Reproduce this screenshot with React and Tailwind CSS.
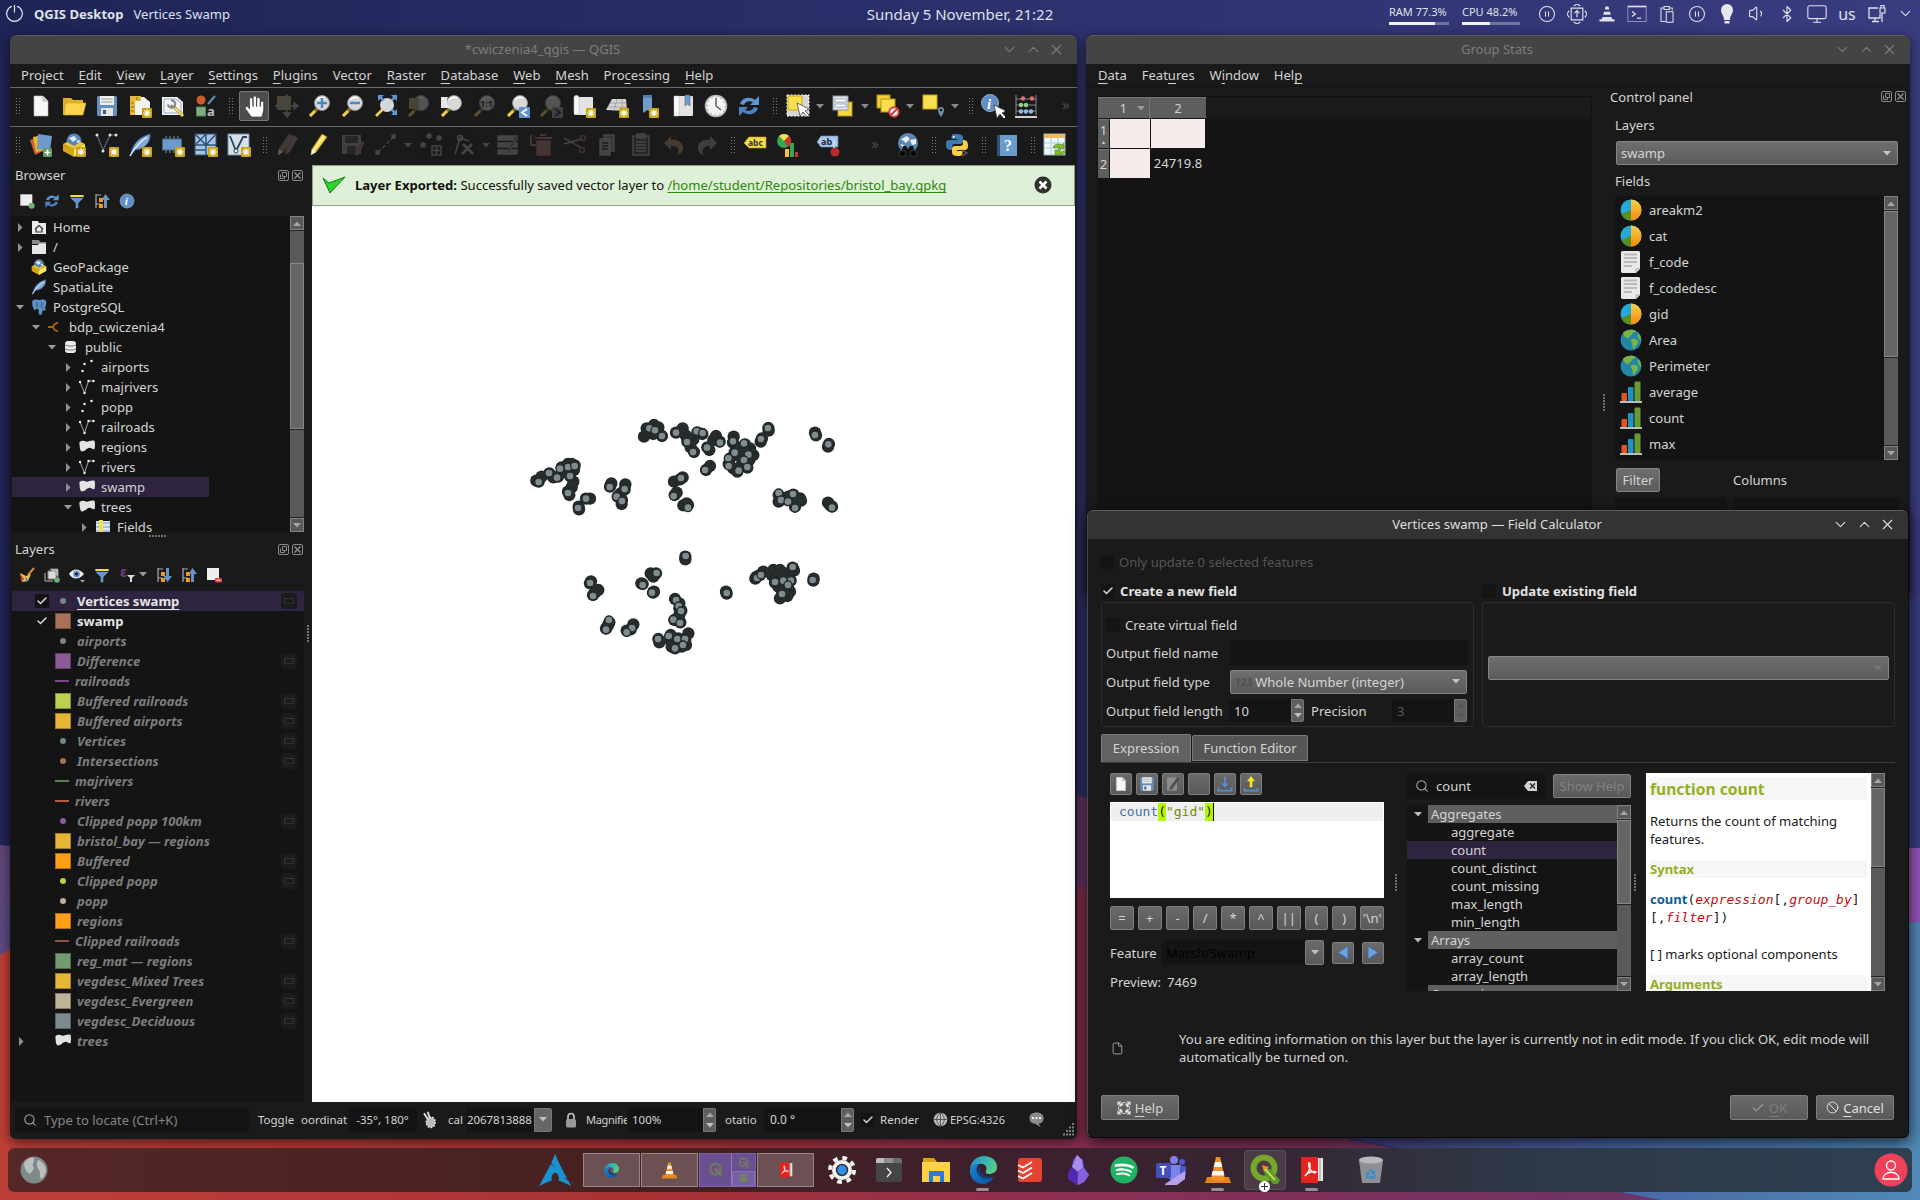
import React from "react";
import {
  Search, CirclePause, Volume1, Bluetooth, Monitor, ChevronDown, ChevronUp, X, Check, Ban, File as FileIcon, Recycle,
} from "lucide-react";
import { SiArchlinux } from "react-icons/si";
import { FaSpotify, FaHandPaper } from "react-icons/fa";

/* ---------- shared bits ---------- */

const Svg = ({ c = "size-6", vb = "0 0 24 24", children }) => (
  <svg className={"shrink-0 " + c} viewBox={vb} fill="none">{children}</svg>
);

/* "Pro~ject" underlines the letter after the tilde */
const Mn = ({ t }) => {
  const i = t.indexOf("~");
  if (i < 0) return <span>{t}</span>;
  return (
    <span>
      {t.slice(0, i)}
      <span className="underline decoration-1 underline-offset-[3px] [text-decoration-skip-ink:none]">{t[i + 1]}</span>
      {t.slice(i + 2)}
    </span>
  );
};

const Caret = ({ c = "text-[#9a9a9a]" }) => (
  <Svg c={"w-[8px] h-[5px] " + c} vb="0 0 8 5"><path d="M0 0h8L4 4.6z" fill="currentColor" /></Svg>
);
const CaretUp = ({ c = "text-[#a5a5a5]" }) => (
  <Svg c={"w-[8px] h-[5px] " + c} vb="0 0 8 5"><path d="M0 5h8L4 .4z" fill="currentColor" /></Svg>
);
const CaretRight = () => (
  <Svg c="w-[5px] h-[9px]" vb="0 0 5 9"><path d="M0 0v9l4.6-4.5z" fill="#8f8f8f" /></Svg>
);

const Handle = ({ c = "w-[13px]" }) => (
  <span className={"flex shrink-0 justify-center " + c}>
    <span className="h-[18px] w-[6px] bg-[radial-gradient(#7d7d7d_1px,transparent_1px)] bg-[size:3px_3px]" />
  </span>
);

const Dots = ({ v }) => (
  <span className={"flex gap-px " + (v ? "flex-col" : "")}>
    {[0, 1, 2, 3, 4, 5].map((i) => <span key={i} className="size-[2px] bg-[#707070]" />)}
  </span>
);

const DockButtons = () => (
  <span className="flex gap-[3px]">
    <Svg c="size-[11px]" vb="0 0 11 11"><rect x=".5" y=".5" width="10" height="10" rx="1.5" stroke="#8a8a8a" /><path d="M4.5 2.5h4v4h-4zM2.5 4.5v4h4v-2" stroke="#8a8a8a" /></Svg>
    <Svg c="size-[11px]" vb="0 0 11 11"><rect x=".5" y=".5" width="10" height="10" rx="1.5" stroke="#8a8a8a" /><path d="M2.5 2.5l6 6M8.5 2.5l-6 6" stroke="#8a8a8a" strokeWidth="1.5" /></Svg>
  </span>
);

const Scroll = ({ before, thumb }) => (
  <div className="flex w-[14px] shrink-0 flex-col bg-[#5a5a5a]">
    <span className="flex h-[14px] shrink-0 items-center justify-center border border-[#828282] bg-[#585858]"><CaretUp /></span>
    <span className={"shrink-0 border-t border-[#222] " + before} />
    <span className={"shrink-0 border border-[#868686] bg-[#656565] shadow-[0_1px_0_#222] " + thumb} />
    <span className="flex-1" />
    <span className="flex h-[14px] shrink-0 items-center justify-center border border-[#828282] bg-[#585858] shadow-[0_-1px_0_#222]"><Caret c="text-[#a5a5a5]" /></span>
  </div>
);

const TitleBar = ({ title, active }) => (
  <div className={"flex h-[29px] shrink-0 items-center rounded-t-[6px] border-t pr-[12px] pb-[2px] pl-[10px] " + (active ? "border-[#5c5c5c] bg-[#333] text-[#dedede]" : "border-[#5c5c5c] bg-[#444] text-[#7c7c7c]")}>
    <span className="w-[64px]" />
    <span className="flex-1 text-center">{title}</span>
    <span className="flex w-[64px] items-center justify-between">
      <ChevronDown size={17} strokeWidth={1.5} />
      <ChevronUp size={17} strokeWidth={1.5} />
      <X size={17} strokeWidth={1.5} />
    </span>
  </div>
);

/* ---------- QGIS icons ---------- */

const Badge = ({ x = 14, y = 14 }) => (
  <g transform={`translate(${x} ${y})`}>
    <rect width="10" height="10" rx="1" fill="#c9a20e" />
    <path d="M5 1.2v7.6M1.2 5h7.6M2.3 2.3l5.4 5.4M7.7 2.3L2.3 7.7" stroke="#fff" strokeWidth="1.1" />
  </g>
);
const Lens = ({ dim, children }) => (
  <Svg>
    <g opacity={dim ? 0.3 : 1}>
      <path d="M2 22l8-8" stroke="#8a6d20" strokeWidth="3.2" />
      <path d="M2 22l5-5" stroke="#f2cf4a" strokeWidth="2.6" />
      <circle cx="14" cy="9" r="7.5" fill="#d8d8d8" stroke="#8e8e8e" />
      <path d="M9 6a6 6 0 0 1 8-2" stroke="#fff" strokeWidth="1.5" />
      {children}
    </g>
  </Svg>
);
const NewDoc = ({ c }) => <Svg c={c}><path d="M5 2h9l5 5v15H5z" fill="#f7f7f7" stroke="#bbb" strokeWidth=".6" /><path d="M14 2v5h5" fill="#d5d5d5" stroke="#999" strokeWidth=".6" /></Svg>;
const Open = () => <Svg><path d="M1 4h8l2 2h10v15H1z" fill="#e0ae2a" /><path d="M2 21L4 9h20l-3 12z" fill="#fcd54f" stroke="#d9a826" strokeWidth=".6" /></Svg>;
const Save = ({ c }) => <Svg c={c}><rect x="2" y="2" width="20" height="20" rx="1.5" fill="#6590c0" /><rect x="5" y="2" width="14" height="9" fill="#eee" /><path d="M6.5 5h11M6.5 8h11" stroke="#999" /><rect x="6" y="14" width="12" height="8" fill="#e5e5e5" /><rect x="8" y="16" width="3" height="4" fill="#44546a" /></Svg>;
const Layout = () => <Svg><path d="M2 3h14l6 5v13H2z" fill="#f4f4f4" /><path d="M2 2h5v19H2zM2 2h11v5H2z" fill="#e2b93a" /><path d="M3 9h3M3 13h3M3 17h3M9 3v3" stroke="#8d6d10" /><Badge /></Svg>;
const Manager = () => <Svg><path d="M1 3h15l6 5v13H1z" fill="#f4f4f4" /><path d="M3 5h12l5 4v10H3z" stroke="#8fa9d6" /><path d="M13 13l9 9" stroke="#c9a840" strokeWidth="3.400" /><path d="M14 14l8 8" stroke="#f3e08a" strokeWidth="1.400" /><path d="M10 6.500a3.600 3.600 0 1 1-3 4M10 11l3 3" stroke="#8a8a8a" strokeWidth="2.200" /></Svg>;
const StyleMgr = () => <Svg><circle cx="7" cy="6" r="4.5" fill="#cc5a2a" /><path d="M14 10l7-8" stroke="#5d8fc4" strokeWidth="2" /><rect x="2.500" y="13" width="9" height="9" fill="#7cae80" stroke="#55805a" /><text x="13" y="22" fontSize="13" fontFamily="Noto Sans" fontWeight="700" fill="#bbb">a</text></Svg>;
const PanSel = () => <Svg><g opacity=".35"><rect x="2" y="2" width="14" height="14" fill="#b09a50" /><path d="M12 1v22M1 12h22M12 1l-3 4h6zM12 23l-3-4h6zM1 12l4-3v6zM23 12l-4-3v6z" stroke="#8899a8" strokeWidth="1.6" fill="#8899a8" /></g></Svg>;
const ZoomFull = () => <Svg><path d="M2 22l7-7" stroke="#f2cf4a" strokeWidth="2.600" /><circle cx="13" cy="11" r="7" fill="#d4d8dc" /><path d="M4 1h6L4 7zM23 1v6l-6-6zM23 21h-6l6-6z" fill="#5f95cf" /><path d="M4.500 1.500l5 5M22.500 1.500l-5 5M22.500 20.500l-5-5" stroke="#5f95cf" strokeWidth="2.500" /></Svg>;
const NewMap = () => <Svg><rect x="2" y="3" width="19" height="18" rx="1" fill="#e3e3e3" /><rect x="2" y="1.500" width="5" height="19" rx="2" fill="#fafafa" stroke="#bbb" strokeWidth=".6" /><Badge /></Svg>;
const Map3d = () => <Svg><path d="M7 5h14l1 12-21-1z" fill="#d5d5d5" /><path d="M5 9h16M3 13h19M12 5L9 17M17 5v12" stroke="#999" strokeWidth=".8" /><Badge /></Svg>;
const BookmarkNew = () => <Svg><path d="M5 1h9v18l-4.500-3L5 19z" fill="#6f9bcd" /><path d="M5 1h9v3H5z" fill="#5580b0" /><Badge x={11} /></Svg>;
const BookmarkShow = () => <Svg><rect x="3" y="2" width="19" height="20" rx="1" fill="#e3e3e3" /><rect x="3" y="2" width="5" height="20" fill="#fbfbfb" stroke="#bbb" strokeWidth=".5" /><path d="M14 1h5v11l-2.500-2-2.500 2z" fill="#6f9bcd" stroke="#44698f" strokeWidth=".6" /></Svg>;
const Clock = () => <Svg><circle cx="12" cy="12" r="10.500" fill="#f3f3f3" stroke="#b8b8b8" strokeWidth="1.500" /><path d="M12 4v8l5 4" stroke="#555" strokeWidth="1.400" /><circle cx="12" cy="12" r="9" stroke="#6fa0d8" strokeWidth="1.200" strokeDasharray="1 3.700" /></Svg>;
const Refresh = ({ c }) => <Svg c={c}><path d="M3 10a9 8 0 0 1 15-4l4-4v9h-9l3-3a6 5 0 0 0-9 3z" fill="#5f95d0" /><path d="M21 14a9 8 0 0 1-15 4l-4 4v-9h9l-3 3a6 5 0 0 0 9-3z" fill="#4b82bf" /></Svg>;
const Cursor = ({ x = 11, y = 9 }) => <path transform={`translate(${x} ${y})`} d="M0 0l3 13 3-4 4 5 2-2-4-4 4-2z" fill="#fff" stroke="#444" strokeWidth=".8" />;
const SelectRect = () => <Svg><rect x="1" y="1" width="22" height="21" fill="#d5d5d5" stroke="#fff" strokeDasharray="2 1.500" /><rect x="2" y="2" width="14" height="14" fill="#fbe04e" stroke="#c7a51a" /><Cursor /></Svg>;
const SelectForm = () => <Svg><rect x="7" y="8" width="14" height="14" fill="#f6d93f" stroke="#b3941a" /><rect x="2" y="2" width="15" height="14" fill="#e6e9ee" stroke="#8a93a0" /><rect x="4" y="5" width="11" height="3" fill="#fff" stroke="#7a8aa0" strokeWidth=".7" /><rect x="4" y="10" width="11" height="3" fill="#fff" stroke="#7a8aa0" strokeWidth=".7" /></Svg>;
const Deselect = () => <Svg><rect x="1" y="1" width="13" height="13" fill="#f3cf38" stroke="#b3941a" /><rect x="5" y="5" width="14" height="13" fill="#fbe04e" stroke="#b3941a" /><circle cx="18" cy="18" r="4.700" fill="#fff" stroke="#d23b3b" strokeWidth="2" /><path d="M15 21l6-6" stroke="#d23b3b" strokeWidth="2" /></Svg>;
const SelectLoc = () => <Svg><rect x="2" y="1" width="14" height="14" fill="#fbe04e" stroke="#c7a51a" /><path d="M20 23c-2-3-3-5-3-7a3 3 0 0 1 6 0c0 2-1 4-3 7z" fill="#6f92a8" /><circle cx="20" cy="16" r="1.300" fill="#1a1a1a" /></Svg>;
const Info = ({ c }) => <Svg c={c}><circle cx="12" cy="12" r="10.500" fill="#5f8fc6" stroke="#86b0dd" /><text x="8.500" y="18" fontSize="17" fontStyle="italic" fontWeight="700" fontFamily="Liberation Serif" fill="#fff">i</text></Svg>;
const Identify = () => <Svg><circle cx="9" cy="9" r="8.500" fill="#5f8fc6" stroke="#86b0dd" /><text x="6" y="15" fontSize="15" fontStyle="italic" fontWeight="700" fontFamily="Liberation Serif" fill="#fff">i</text><Cursor x={13} y={11} /></Svg>;
const Abacus = () => <Svg><path d="M2 1v20M22 1v20M2 5h20M2 11h20M2 17h20" stroke="#888" /><path d="M1 23h22" stroke="#d0d0d0" strokeWidth="2" /><g fill="#e07070"><circle cx="9" cy="4.500" r="2.200" /><circle cx="18" cy="4.500" r="2.200" /></g><g fill="#8fd08f"><circle cx="7" cy="11" r="2.200" /><circle cx="12" cy="11" r="2.200" /></g><g fill="#8fbbe0"><circle cx="7" cy="17.500" r="2.200" /><circle cx="12" cy="17.500" r="2.200" /><circle cx="17" cy="17.500" r="2.200" /></g></Svg>;
const DataSource = () => <Svg><path d="M1 7l9-3 4 14-8 4z" fill="#d0602a" /><path d="M4 4l10-2 2 15-9 2z" fill="#e9b52e" /><path d="M9 1l14 2-2 15-13-2z" fill="#6b9acb" /><rect x="14" y="15" width="9" height="9" rx="1" fill="#5d9a63" /><path d="M18.500 16.500v6M15.500 19.500h6" stroke="#fff" strokeWidth="1.700" /></Svg>;
const GeoPkg = ({ c, badge }) => <Svg c={c}><circle cx="12" cy="8" r="7.500" fill="#5a84b4" /><path d="M7 5l5-2 3 3-4 3zM14 8l4-1-1 4z" fill="#dfe8f2" /><path d="M1 11l11 5v8L1 18z" fill="#d9a412" /><path d="M23 11l-11 5v8l11-6z" fill="#fbe96a" /><path d="M1 11l11 5 11-5-4-2-7 4-7-4z" fill="#efc53a" />{badge && <Badge />}</Svg>;
const ShapeNew = () => <Svg><path d="M2 2l6 15 7-15h6" stroke="#54657a" strokeWidth="1.200" /><g fill="#d9e2ee"><circle cx="2" cy="2" r="1.500" /><circle cx="8" cy="18" r="1.500" /><circle cx="15" cy="2" r="1.500" /><circle cx="21" cy="2" r="1.500" /></g><Badge /></Svg>;
const Feather = ({ c, badge }) => <Svg c={c}><path d="M2 23C4 14 8 5 22 1c1 8-5 15-15 16z" fill="#84abd6" stroke="#3a5c84" strokeWidth="1" /><path d="M2 23C7 14 12 9 19 4" stroke="#eaf2fb" strokeWidth="1.200" />{badge && <Badge />}</Svg>;
const Memory = () => <Svg><path d="M5 3v17M9 3v17M13 3v17M17 3v17" stroke="#8296ae" /><rect x="1.500" y="6" width="19" height="11" fill="#6b9acb" stroke="#3f668f" /><Badge /></Svg>;
const MeshNew = () => <Svg><rect x="1" y="1" width="21" height="21" fill="#a9c4e2" /><path d="M1 1l11 11M12 1L1 12M12 12L22 1M1 12h21M12 1v21M1 17h10" stroke="#2f5378" strokeWidth="1.500" /><rect x="1" y="1" width="21" height="21" stroke="#2f5378" /><Badge /></Svg>;
const VirtualNew = () => <Svg><rect x="1" y="1" width="21" height="21" fill="#d6e1ec" stroke="#6b8cae" /><path d="M3 3l6 15 7-14h4" stroke="#2f4256" strokeWidth="1.800" /><circle cx="9" cy="18" r="2" fill="#fff" stroke="#2f4256" /><Badge /></Svg>;
const Pencil = ({ dim }) => <Svg><g opacity={dim ? 0.3 : 1}><path d="M3 22l1-6L14 1l5 3L8 19z" fill={dim ? "#a08080" : "#f3da57"} stroke="#9c8420" strokeWidth=".7" /><path d="M3 22l1-6 4 3z" fill="#eee" />{dim && <path d="M10 22l1-6L19 2l4 3-8 14z" fill="#a08080" />}{!dim && <path d="M6 17L16 2.500" stroke="#fff7b8" strokeWidth="1.200" />}</g></Svg>;
const Dim = ({ children }) => <Svg><g opacity=".32" stroke="#a5a5a5" strokeWidth="1.400" fill="#9a9a9a">{children}</g></Svg>;
const SaveEdits = () => <Svg><g opacity=".3"><rect x="1" y="2" width="19" height="19" fill="#9a9a9a" /><rect x="4" y="3" width="13" height="7" fill="#444" /><rect x="6" y="13" width="9" height="8" fill="#444" /><path d="M15 22l7-13" stroke="#a07070" strokeWidth="4" /></g></Svg>;
const AbcTag = () => <Svg><path d="M1 10l5-6h17v11H6z" fill="#f7dc4a" stroke="#b3941a" strokeWidth=".7" /><text x="5" y="13" fontSize="8.500" fontWeight="700" fontFamily="Noto Sans" fill="#333">abc</text></Svg>;
const Diagram = () => <Svg><circle cx="8" cy="8" r="7" fill="#34a853" /><path d="M8 8L3 3a7 7 0 0 1 10 0z" fill="#fbe04e" /><path d="M8 8l5-5a7 7 0 0 1-1 11z" fill="#c8372d" /><rect x="9" y="16" width="4" height="8" fill="#fbc02d" /><rect x="14" y="10" width="4" height="14" fill="#34a853" /><rect x="19" y="19" width="3" height="5" fill="#c8372d" /></Svg>;
const AbPin = () => <Svg><path d="M1 9l4-6h17v11H5z" fill="#a9c9ee" stroke="#5d85b5" strokeWidth=".7" /><text x="5" y="12" fontSize="9" fontWeight="700" fontFamily="Noto Sans" fill="#223">ab</text><circle cx="19" cy="19" r="4.500" fill="#b92b2b" /><path d="M18 15V8" stroke="#ddd" strokeWidth="1.500" /></Svg>;
const MetaSearch = () => <Svg><circle cx="12" cy="10" r="10" fill="#5b87b5" /><path d="M5 6l6-3 3 3-4 4zM14 7l6-1v5l-4 1zM4 11l4 1v4z" fill="#e5edf5" /><path d="M4 22l3-9h3l2 3 2-3h3l3 9z" fill="#111" /><circle cx="6.500" cy="20.500" r="3.500" fill="#090909" stroke="#555" strokeWidth=".6" /><circle cx="17.500" cy="20.500" r="3.500" fill="#090909" stroke="#555" strokeWidth=".6" /></Svg>;
const Python = () => <Svg><path d="M11 1c-5 0-4.500 2-4.500 5H12v1H4C1 7 1 10 1 12s1 5 4 5h2v-3c0-2 1-3 3-3h5c2 0 3-1 3-3V5c0-3-2-4-7-4z" fill="#3f79b0" /><path d="M13 23c5 0 4.500-2 4.500-5H12v-1h8c3 0 3-3 3-5s-1-5-4-5h-1v3c0 2-1 3-3 3h-5c-2 0-3 1-3 3v3c0 3 2 4 6 4z" fill="#f9cf45" /><circle cx="8.700" cy="3.700" r="1" fill="#fff" /><path d="M17 17l5 3-5 3" stroke="#555" strokeWidth="1.500" /></Svg>;
const HelpBook = () => <Svg><rect x="2" y="2" width="5" height="21" fill="#33506f" /><rect x="5" y="2" width="17" height="21" fill="#6b9acb" /><text x="9" y="18" fontSize="16" fontWeight="700" fontFamily="Liberation Serif" fill="#fff">?</text></Svg>;
const GroupTable = () => <Svg><rect x="1" y="1" width="21" height="21" fill="#f4f8fb" stroke="#8eb4cf" /><rect x="1" y="1" width="21" height="4" fill="#f1b95d" /><path d="M1 10h21M1 15h21M8 5v17M15 5v17" stroke="#9fd0ea" /><path d="M10 14a6 5 0 0 1 9-2l2-2v6h-6l2-2a4 3 0 0 0-4 1zM23 18a6 5 0 0 1-9 3l-2 2v-6h6l-2 2a4 3 0 0 0 4-1z" fill="#84c225" stroke="#4d7c10" strokeWidth=".6" /></Svg>;

const Cell = ({ children, c = "w-[33px]" }) => <span className={"flex shrink-0 items-center justify-center " + c}>{children}</span>;
const Drop = ({ dim }) => <Cell c="w-[12px]"><Caret c={dim ? "text-[#454545]" : "text-[#8a8a8a]"} /></Cell>;

const Toolbar1 = () => (
  <div className="flex h-[39px] shrink-0 items-center border-t border-[#6b6b6b] pb-[2px]">
    <Handle c="w-[14px] pl-px" />
    <Cell><NewDoc /></Cell><Cell><Open /></Cell><Cell><Save /></Cell><Cell><Layout /></Cell><Cell><Manager /></Cell><Cell><StyleMgr /></Cell>
    <Handle c="w-[16px] pl-[2px]" />
    <Cell c="w-[32px]"><span className="flex size-[30px] items-center justify-center rounded-[2px] border border-[#777] bg-[#4c4c4c]"><FaHandPaper size={21} color="#fff" stroke="#222" strokeWidth="14" /></span></Cell>
    <Cell><PanSel /></Cell>
    <Cell><Lens><path d="M14 4v10M9 9h10" stroke="#4f86c4" strokeWidth="2.400" /></Lens></Cell>
    <Cell><Lens><path d="M9 9h10" stroke="#4f86c4" strokeWidth="2.400" /></Lens></Cell>
    <Cell><ZoomFull /></Cell>
    <Cell><Lens dim><rect x="2" y="4" width="10" height="11" fill="#b0a878" /></Lens></Cell>
    <Cell><Lens><path d="M1 3h7c-2 4-1 8 2 11H1z" fill="#e8e8e8" /></Lens></Cell>
    <Cell><Lens dim><text x="7" y="13" fontSize="9" fontWeight="700" fontFamily="Noto Sans" fill="#222">1:1</text></Lens></Cell>
    <Cell><Lens><rect x="13" y="13" width="11" height="11" fill="#5f95cf" /><path d="M21 15l-5 3.500 5 3.500" stroke="#fff" strokeWidth="1.800" /></Lens></Cell>
    <Cell><Lens dim><rect x="13" y="13" width="11" height="11" fill="#999" /><path d="M16 15l5 3.500-5 3.500" stroke="#222" strokeWidth="1.800" /></Lens></Cell>
    <Cell><NewMap /></Cell><Cell><Map3d /></Cell><Cell><BookmarkNew /></Cell><Cell><BookmarkShow /></Cell><Cell><Clock /></Cell><Cell><Refresh /></Cell>
    <Handle c="w-[16px] pl-[4px]" />
    <Cell><SelectRect /></Cell><Drop /><Cell><SelectForm /></Cell><Drop /><Cell><Deselect /></Cell><Drop /><Cell><SelectLoc /></Cell><Drop />
    <Handle c="w-[15px] pl-[5px]" />
    <Cell><Identify /></Cell><Cell><Abacus /></Cell>
    <span className="flex-1" />
    <span className="w-[15px] pb-1 text-[15px] text-[#4a4a4a]">»</span>
  </div>
);

const Toolbar2 = () => (
  <div className="flex h-[39px] shrink-0 items-center border-t border-[#6b6b6b] pb-[2px]">
    <Handle c="w-[14px] pl-px" />
    <Cell><DataSource /></Cell><Cell><GeoPkg badge /></Cell><Cell><ShapeNew /></Cell><Cell><Feather badge /></Cell><Cell><Memory /></Cell><Cell><MeshNew /></Cell><Cell><VirtualNew /></Cell>
    <Handle c="w-[15px] pl-[4px]" />
    <Cell><Pencil dim /></Cell><Cell><Pencil /></Cell><Cell><SaveEdits /></Cell>
    <Cell><Dim><path d="M4 19L20 4" strokeDasharray="4 2" /><rect x="2" y="18" width="3" height="3" /><rect x="18" y="2" width="3" height="3" /></Dim></Cell><Drop dim />
    <Cell><Dim><circle cx="4" cy="12" r="2" /><circle cx="10" cy="3" r="2" /><circle cx="20" cy="5" r="2" /><rect x="13" y="13" width="9" height="9" fill="none" /><path d="M17.500 14v7M14 17.500h7" /></Dim></Cell>
    <Cell><Dim><path d="M3 21L8 5l9 3" fill="none" /><circle cx="8" cy="5" r="2.500" fill="none" /><path d="M10 21l10-10M11 11l10 10" strokeWidth="2.500" /></Dim></Cell><Drop dim />
    <Cell><Dim><rect x="1" y="3" width="19" height="4" /><rect x="1" y="10" width="19" height="4" /><rect x="1" y="17" width="19" height="4" /><path d="M11 20l9-17" strokeWidth="3" stroke="#777" /></Dim></Cell>
    <Cell><Dim><rect x="7" y="8" width="13" height="14" fill="#a07070" stroke="#a07070" /><path d="M5 5h17M10 2h6M1 2v10h5" stroke="#a07070" strokeWidth="2" fill="none" /></Dim></Cell>
    <Cell><Dim><path d="M1 5l18 10M1 11l18-5" fill="none" /><circle cx="20" cy="5" r="2.500" fill="none" stroke="#a06060" /><circle cx="19" cy="17" r="2.500" fill="none" stroke="#a06060" /></Dim></Cell>
    <Cell><Dim><path d="M8 2h10v16H8z" fill="#777" /><path d="M4 6h10v16H4z" /><path d="M6 10h6M6 13h6M6 16h6" stroke="#222" /></Dim></Cell>
    <Cell><Dim><rect x="4" y="3" width="16" height="19" fill="#444" /><rect x="8" y="1" width="8" height="4" /><path d="M7 9h10M7 12h10M7 15h10M7 18h10" /></Dim></Cell>
    <Cell><Dim><path d="M2 10l7-7v4c8-1 12 3 12 8 0 4-3 7-6 7 3-4 2-9-6-9v4z" fill="#a08060" stroke="none" /></Dim></Cell>
    <Cell><Dim><path d="M22 10l-7-7v4C7 6 3 10 3 15c0 4 3 7 6 7-3-4-2-9 6-9v4z" fill="#889088" stroke="none" /></Dim></Cell>
    <Handle c="w-[15px] pl-[4px]" />
    <Cell><AbcTag /></Cell><Cell><Diagram /></Cell><Cell c="w-[47px]"><AbPin /></Cell>
    <span className="flex w-[40px] justify-center pb-1 pl-2 text-[15px] text-[#4a4a4a]">»</span>
    <Cell><MetaSearch /></Cell>
    <Handle c="w-[16px] pl-[4px]" /><Cell><Python /></Cell>
    <Handle c="w-[17px] pl-[4px]" /><Cell><HelpBook /></Cell>
    <Handle c="w-[15px] pl-[4px]" /><Cell><GroupTable /></Cell>
  </div>
);

/* ---------- browser panel ---------- */

const Funnel = ({ c }) => <Svg c={c}><path d="M2 3h20v3H2z" fill="#f4d84a" /><path d="M2 7h20l-8 8v8h-4v-8z" fill="#6795c9" /></Svg>;
const TreeArrow = ({ down }) => <Svg c="size-4"  vb="0 0 16 16"><path d="M2 1v14M2 2h5M2 11h5" stroke="#aaa" strokeWidth="1.200" /><rect x="5" y="5" width="4" height="4" fill="#f09a1a" /><rect x="5" y="11" width="4" height="4" fill="#f09a1a" />{down ? <path d="M10 1h3v8h3l-4.500 6L7.500 9H10z" fill="#6795c9" /> : <path d="M10 15h3V7h3l-4.500-6L7.500 7H10z" fill="#6795c9" />}</Svg>;

const bIcon = {
  home: <Svg c="size-4" vb="0 0 16 16"><path d="M1 2h6l1 2h7v11H1z" fill="#ececec" /><path d="M4 10l4-3.500 4 3.500M5 9.500V13h6V9.500" stroke="#333" strokeWidth="1.200" /></Svg>,
  dir: <Svg c="size-4" vb="0 0 16 16"><path d="M1 1h7l1 2h6v2H1z" fill="#858a85" /><path d="M1 6h6l1-1.500h7V15H1z" fill="#e6e6e6" /></Svg>,
  gpkg: <GeoPkg c="size-4" />,
  lite: <Feather c="size-4" />,
  pg: <Svg c="size-4" vb="0 0 16 16"><path d="M2 1c3-1.300 5 0 6.500 0S13-.5 15 2c1 2-.5 6-1.500 7.500l2 .5-1.500 1.500h-2.500L11 15c-.5 1-3 1-3.200 0L7.500 10H5l-1 1.500C2 10 0 3.500 2 1z" fill="#5f90c6" /><path d="M5.500 9c1-2 .3-4 .5-6M10.500 3c1 2-.5 4 .8 6.500" stroke="#24425f" strokeWidth=".8" /></Svg>,
  conn: <Svg c="size-4" vb="0 0 16 16"><path d="M1 8h5M11 4c-3 0-4 1-5 4 1 3 2 4 5 4" stroke="#a3640c" strokeWidth="1.800" /></Svg>,
  db: <Svg c="size-4" vb="0 0 16 16"><rect x="2" y="2" width="11" height="12" rx="3" fill="#ececec" /><path d="M2 6c3 1.500 8 1.500 11 0M2 10c3 1.500 8 1.500 11 0" stroke="#777" /></Svg>,
  pt: <Svg c="size-4" vb="0 0 16 16"><g fill="#e6e6e6"><circle cx="3.500" cy="12" r="1.300" /><circle cx="5.500" cy="5" r="1.300" /><circle cx="12.500" cy="2" r="1.300" /></g></Svg>,
  ln: <Svg c="size-4" vb="0 0 16 16"><path d="M1 3l4.500 11L9.500 2h5" stroke="#aaa" strokeWidth="1" /><g fill="#eee"><circle cx="1" cy="3" r="1.200" /><circle cx="5.500" cy="14" r="1.200" /><circle cx="9.500" cy="2" r="1.200" /><circle cx="14.500" cy="2" r="1.200" /></g></Svg>,
  pg2: <Svg c="size-4" vb="0 0 16 16"><path d="M.3 3.500C2 1 5 1.500 7 2.500s5-2 8.500-.7c.7 2 .6 6 0 8.200-2 1-3-1.500-5-1.200-3 .4-4.500 4-8 3.700C.5 11 .8 6 .3 3.500z" fill="#e3e3e3" /></Svg>,
  fields: <Svg c="size-4" vb="0 0 16 16"><rect x="1" y="2" width="14" height="14" fill="#dce8f4" /><path d="M1 4h14M1 8h14M1 12h14" stroke="#6d9bcb" /><rect x="4" y="1" width="4" height="15" fill="#f4e04a" /></Svg>,
};

const browserRows = [
  ["pl-[6px]", "r", "home", "Home"],
  ["pl-[6px]", "r", "dir", "/"],
  ["pl-[6px]", "", "gpkg", "GeoPackage"],
  ["pl-[6px]", "", "lite", "SpatiaLite"],
  ["pl-[6px]", "d", "pg", "PostgreSQL"],
  ["pl-[22px]", "d", "conn", "bdp_cwiczenia4"],
  ["pl-[38px]", "d", "db", "public"],
  ["pl-[54px]", "r", "pt", "airports"],
  ["pl-[54px]", "r", "ln", "majrivers"],
  ["pl-[54px]", "r", "pt", "popp"],
  ["pl-[54px]", "r", "ln", "railroads"],
  ["pl-[54px]", "r", "pg2", "regions"],
  ["pl-[54px]", "r", "ln", "rivers"],
  ["pl-[54px]", "r", "pg2", "swamp"],
  ["pl-[54px]", "d", "pg2", "trees"],
  ["pl-[70px]", "r", "fields", "Fields"],
];

const PanelHead = ({ title, c }) => (
  <div className={"flex shrink-0 items-center justify-between pr-px pb-px pl-[4px] " + c}>
    <span>{title}</span><DockButtons />
  </div>
);

const Browser = () => (
  <>
    <PanelHead title="Browser" c="h-[21px]" />
    <div className="flex h-[30px] shrink-0 items-center gap-[9px] pb-px pl-[8px]">
      <Svg c="size-4"><rect x="2" y="2" width="18" height="17" fill="#eee" /><circle cx="19" cy="19" r="4.500" fill="#6fae75" /></Svg>
      <Refresh c="size-4" /><Funnel c="size-4" /><TreeArrow /><Info c="size-4" />
    </div>
    <div className="flex h-[316px] shrink-0 overflow-hidden bg-[#141414]">
      <div className="flex-1 pt-px pl-px">
        {browserRows.map(([pad, a, ic, t]) => (
          <div key={t} className={"flex h-5 items-center " + pad + (t === "swamp" ? " w-[197px] bg-[#2f2440]" : "")}>
            <span className="flex w-[13px] shrink-0 items-center">{a === "r" ? <CaretRight /> : a === "d" ? <Caret c="-ml-[2px] text-[#9a9a9a]" /> : null}</span>
            {bIcon[ic]}<span className="pl-[6px]">{t}</span>
          </div>
        ))}
      </div>
      <Scroll before="h-[33px]" thumb="h-[166px]" />
    </div>
  </>
);

/* ---------- layers panel ---------- */

const Sq = (cls) => <span className={"size-[16px] border border-black/30 " + cls} />;
const Ln = (cls) => <span className={"h-[2px] w-[14px] " + cls} />;
const Pt = (cls) => <span className={"ml-[5px] size-[6px] rounded-full " + cls} />;
const layers = [
  ["Vertices swamp", Pt("bg-[#76868a]"), 1],
  ["swamp", Sq("bg-[#a87259]"), 0],
  ["airports", Pt("bg-[#76868a]"), 0],
  ["Difference", Sq("bg-[#8d5a99]"), 1],
  ["railroads", Ln("bg-[#7a4886]"), 0, "l"],
  ["Buffered railroads", Sq("bg-[#bdd04f]"), 1],
  ["Buffered airports", Sq("bg-[#e5b636]"), 1],
  ["Vertices", Pt("bg-[#76868a]"), 1],
  ["Intersections", Pt("bg-[#a87259]"), 1],
  ["majrivers", Ln("bg-[#5a8057]"), 0, "l"],
  ["rivers", Ln("bg-[#b85a3c]"), 0, "l"],
  ["Clipped popp 100km", Pt("bg-[#8d5a99]"), 1],
  ["bristol_bay — regions", Sq("bg-[#e5b636]"), 0],
  ["Buffered", Sq("bg-[#ff9e17]"), 1],
  ["Clipped popp", Pt("bg-[#bdd04f]"), 1],
  ["popp", Pt("bg-[#beb297]"), 0],
  ["regions", Sq("bg-[#ff9e17]"), 0],
  ["Clipped railroads", Ln("bg-[#855545]"), 1, "l"],
  ["reg_mat — regions", Sq("bg-[#729b6f]"), 0],
  ["vegdesc_Mixed Trees", Sq("bg-[#e5b636]"), 1],
  ["vegdesc_Evergreen", Sq("bg-[#beb297]"), 1],
  ["vegdesc_Deciduous", Sq("bg-[#7d8b8f]"), 1],
  ["trees", bIcon.pg2, 0],
];

const MemInd = () => (
  <span className="flex size-4 items-center justify-center rounded-[3px] bg-[#1b1b1b]">
    <span className="h-[6px] w-[10px] rounded-[1px] border border-b-[#2c2c2c] border-[#363636]" />
  </span>
);

const Layers = () => (
  <>
    <div className="flex h-[7px] shrink-0 items-center justify-center"><Dots /></div>
    <PanelHead title="Layers" c="h-[21px]" />
    <div className="flex h-[31px] shrink-0 items-center gap-[9px] pb-[2px] pl-[8px]">
      <Svg c="size-4" vb="0 0 16 16"><path d="M9 8l6-7" stroke="#c98f3c" strokeWidth="2" /><path d="M1 6l6 3 5-2-3 7-6 1z" fill="#f1c63c" /><path d="M1 6l4 6-2 3z" fill="#c9442e" /><path d="M6 9l4 4-3 2z" fill="#5a8fd0" /></Svg>
      <Svg c="size-4" vb="0 0 16 16"><path d="M1 6v8h8" stroke="#bbb" /><path d="M4 4h8v8H4zM6 2h8v8" fill="#ddd" stroke="#888" /><circle cx="13" cy="13" r="2.800" fill="#6fae75" /></Svg>
      <Svg c="size-4" vb="0 0 16 16"><path d="M0 7c4-6 10-6 15 0-5 6-11 6-15 0z" fill="#f0f0f0" /><circle cx="7.500" cy="7" r="3.400" fill="#6795c9" /><circle cx="7.500" cy="7" r="1.500" fill="#111" /><path d="M11 13h5l-2.500 2.500z" fill="#aaa" /></Svg>
      <Funnel c="size-4" />
      <span className="flex w-[28px] items-center gap-[4px]"><Svg c="size-4" vb="0 0 16 16"><text x="1" y="10" fontSize="14" fontFamily="Noto Sans" fontWeight="700" fill="#6d4078">ε</text><path d="M8 8h8l-3 3v4h-2v-4z" fill="#ddd" /></Svg><Caret /></span>
      <TreeArrow down /><TreeArrow />
      <Svg c="size-4" vb="0 0 16 16"><rect x="1" y="1" width="12" height="12" fill="#eee" /><rect x="9" y="11" width="7" height="4.500" rx="1" fill="#e23b3b" /><path d="M10.500 13.200h4" stroke="#fff" /></Svg>
    </div>
    <div className="flex-1 bg-[#141414] pl-px">
      {layers.map(([t, sym, mem, kind], i) => (
        <div key={t} className={"flex h-5 items-center pr-[7px] " + (i === 0 ? "bg-[#2f2440]" : "")}>
          <span className="flex w-[23px] shrink-0 pl-[7px]">{t === "trees" && <CaretRight />}</span>
          <span className={"mr-[6px] flex size-[14px] shrink-0 items-center justify-center " + (i === 0 ? "bg-[#141414]" : "")}>{i < 2 && <Check size={12} strokeWidth={3.2} color="#d5d5d5" />}</span>
          <span className={"flex shrink-0 items-center " + (kind ? "w-[20px]" : "w-[22px]")}>{sym}</span>
          <span className={"flex-1 font-bold " + (i === 0 ? "text-[#e4e4e4] underline decoration-1 underline-offset-[3px] [text-decoration-skip-ink:none]" : i === 1 ? "text-[#e4e4e4]" : "text-[#7d7d7d] italic")}>{t}</span>
          {mem ? <MemInd /> : null}
        </div>
      ))}
    </div>
  </>
);

/* ---------- map ---------- */

const dark = [
  [432, 140], [440, 115], [462, 105], [460, 132], [486, 138], [475, 112], [528, 128], [548, 115], [556, 135], [592, 127], [607, 132], [562, 155], [572, 172], [582, 186], [580, 148], [648, 138], [659, 155], [622, 172], [628, 180], [640, 150],
  [701, 140], [699, 158], [805, 114], [806, 122], [786, 145], [782, 155], [735, 163], [704, 187], [720, 175], [750, 175], [760, 195], [690, 205], [686, 222], [712, 245], [732, 210], [742, 233], [720, 200], [700, 235], [728, 190], [725, 225], [748, 210],
  [945, 128], [948, 136], [987, 162], [984, 170], [630, 228], [618, 240], [116, 275], [109, 272], [125, 260], [148, 250], [160, 262], [185, 232], [204, 222], [215, 222], [224, 226], [222, 240], [210, 258], [220, 275], [174, 260], [195, 240], [204, 305], [208, 315], [215, 292],
  [258, 326], [270, 326], [236, 350], [237, 358], [334, 280], [330, 290], [376, 283], [374, 298], [353, 320], [366, 330], [365, 342], [362, 310], [548, 262], [540, 268], [522, 275], [524, 315], [530, 308], [550, 346], [564, 345], [560, 340],
  [836, 315], [843, 330], [836, 335], [862, 330], [880, 314], [885, 350], [900, 325], [903, 332], [865, 320], [888, 338], [984, 338], [990, 345], [996, 350],
  [556, 500], [556, 508], [452, 550], [468, 550], [460, 560], [428, 582], [424, 580], [462, 605], [459, 608], [273, 574], [270, 580], [295, 600], [285, 608], [279, 615], [678, 605], [680, 611], [328, 697], [324, 706], [318, 716], [400, 703], [392, 718], [380, 722],
  [525, 627], [538, 640], [538, 655], [544, 662], [538, 675], [523, 690], [541, 697], [475, 747], [478, 757], [512, 735], [510, 750], [535, 745], [565, 730], [556, 750], [558, 765], [545, 770], [525, 775], [515, 770], [540, 755],
  [790, 545], [770, 560], [766, 566], [780, 555], [820, 540], [840, 540], [815, 555], [878, 533], [882, 542], [860, 550], [845, 565], [825, 578], [835, 590], [872, 572], [864, 587], [846, 612], [840, 625], [862, 618], [870, 605], [852, 600], [830, 560], [941, 566], [940, 572],
];
const light = [
  [448, 115], [465, 121], [486, 138], [528, 128], [590, 124], [608, 129], [561, 156], [579, 186], [660, 158], [621, 173], [699, 154], [804, 114], [783, 147], [732, 160], [704, 188], [745, 194], [685, 205], [732, 210], [742, 231], [716, 242], [686, 228], [945, 135], [985, 163], [615, 240], [116, 276], [147, 249], [204, 231], [224, 228], [180, 236], [210, 258], [171, 263], [204, 309], [258, 326], [234, 354], [329, 291], [374, 297], [350, 320], [366, 333], [543, 264], [521, 318], [564, 353], [836, 309], [843, 330], [879, 312], [864, 335], [885, 354], [996, 353],
  [557, 498], [470, 549], [428, 585], [456, 608], [270, 579], [279, 618], [680, 609], [938, 570], [327, 690], [318, 719], [396, 714], [380, 727], [528, 630], [536, 648], [543, 663], [520, 689], [540, 699], [474, 747], [506, 738], [532, 747], [555, 747], [549, 765], [525, 775], [878, 531], [771, 564], [783, 555], [825, 576], [850, 572], [873, 572], [864, 585], [846, 612],
];

const MapCanvas = () => (
  <svg className="block h-[896px] w-[763px] bg-white" viewBox="312 206 763 896">
    <g transform="translate(500 390) scale(.33333)">
      {dark.map(([x, y], i) => <circle key={i} cx={x} cy={y} r="18.500" fill="#242929" />)}
      {dark.map(([x, y], i) => <circle key={i} cx={x + 2} cy={y - 2} r="11" stroke="#313838" strokeWidth="1.500" fill="none" />)}
      {light.map(([x, y], i) => <circle key={i} cx={x} cy={y} r="12" fill="#7f8d90" stroke="#23282a" strokeWidth="4" />)}
    </g>
  </svg>
);

/* ---------- status bar ---------- */

const Spin = ({ dim, h = "h-[24px]" }) => (
  <span className={"flex w-[13px] shrink-0 flex-col items-center justify-between rounded-r-[2px] border border-[#777] bg-[#5e5e5e] py-[3px] " + h}>
    <CaretUp c={dim ? "text-[#555]" : "text-[#a5a5a5]"} /><Caret c={dim ? "text-[#555]" : "text-[#c0c0c0]"} />
  </span>
);

const StatusBar = () => (
  <div className="flex h-[37px] shrink-0 items-center pb-[2px] text-[12px] text-[#d4d4d4]">
    <span className="ml-[5px] flex h-[26px] w-[234px] shrink-0 items-center rounded-[3px] bg-[#141414] pl-[8px] text-[13px] text-[#858585]"><Search size={14} strokeWidth={1.8} color="#aaa" /><span className="pl-[7px]">Type to locate (Ctrl+K)</span></span>
    <span className="ml-[9px] w-[37px] shrink-0 text-[11.500px]">Toggle</span>
    <span className="ml-[6px] w-[45px] shrink-0 text-[11.500px]">oordinat</span>
    <span className="ml-[2px] flex h-[24px] w-[69px] shrink-0 items-center justify-center rounded-[3px] bg-[#141414] text-[11.500px]">-35°, 180°</span>
    <Svg c="ml-[4px] size-[18px]"><path d="M4 3l5 8M9 1l3 10" stroke="#ddd" strokeWidth="2.500" /><ellipse cx="13" cy="15" rx="6" ry="7" fill="#bbb" stroke="#eee" strokeDasharray="2 2" strokeWidth="2" /></Svg>
    <span className="ml-[9px] w-[17px] shrink-0 text-[11.500px]">cal</span>
    <span className="ml-[1px] flex h-[24px] w-[68px] shrink-0 items-center bg-[#141414] pl-[1px] text-[11.500px] tracking-[-0.1px]">2067813888</span>
    <span className="flex h-[24px] w-[18px] shrink-0 items-center justify-center rounded-r-[2px] border border-[#777] bg-[#666]"><Caret c="text-[#c0c0c0]" /></span>
    <Svg c="ml-[12px] h-[16px] w-[14px]" vb="0 0 14 16"><path d="M4 8V4.500a3 3 0 0 1 6 0V8" stroke="#c5c5c5" strokeWidth="1.600" /><rect x="2" y="7" width="10" height="8.500" rx="1.500" fill="#999" /></Svg>
    <span className="ml-[8px] w-[41px] shrink-0 text-[11px] tracking-[-0.3px] whitespace-nowrap">Magnifie</span>
    <span className="flex h-[24px] w-[76px] shrink-0 items-center rounded-l-[3px] bg-[#141414] pl-[5px] text-[11.500px]">100%</span><Spin />
    <span className="ml-[9px] w-[35px] shrink-0 text-[11.500px]">otatio</span>
    <span className="ml-[4px] flex h-[24px] w-[77px] shrink-0 items-center rounded-l-[3px] bg-[#141414] pl-[6px]">0.0 °</span><Spin />
    <span className="ml-[7px] flex size-[14px] shrink-0 items-center justify-center bg-[#141414]"><Check size={12} strokeWidth={3} /></span>
    <span className="ml-[5px] w-[39px] shrink-0 text-[11.500px]">Render</span>
    <Svg c="ml-[14px] size-[15px]"><circle cx="12" cy="12" r="11" fill="#bdbdbd" /><path d="M1 12h22M12 1v22M12 1c-8 6-8 16 0 22 8-6 8-16 0-22" stroke="#444" strokeWidth="1.300" /></Svg>
    <span className="ml-[2px] w-[59px] shrink-0 text-[11px]">EPSG:4326</span>
    <Svg c="ml-[19px] size-[17px]"><path d="M12 2c6 0 10 3 10 8s-3 8-7 8l3 5-8-5C5 18 2 15 2 10s4-8 10-8z" fill="#8a8a8a" /><g fill="#fff"><circle cx="7" cy="10" r="1.600" /><circle cx="12" cy="10" r="1.600" /><circle cx="17" cy="10" r="1.600" /></g></Svg>
    <Svg c="mt-5 ml-[16px] size-[13px]" vb="0 0 13 13"><path d="M11 1h2M8 4.500h2m1 0h2M5 8h2m1 0h2m1 0h2M2 11.500h2m1 0h2m1 0h2m1 0h2" stroke="#808080" strokeWidth="2" /></Svg>
  </div>
);

/* ---------- QGIS window ---------- */

const MainWindow = () => (
  <div className="absolute top-[35px] left-[10px] flex h-[1104px] w-[1067px] flex-col overflow-hidden rounded-[6px] bg-[#1a1a1a] shadow-[0_3px_12px_rgba(0,0,0,0.6)]">
    <TitleBar title="*cwiczenia4_qgis — QGIS" />
    <div className="flex h-[23px] shrink-0 items-center gap-[14.800px] pb-px pl-[11px]">
      {["Pro~ject", "~Edit", "~View", "~Layer", "~Settings", "~Plugins", "Vect~or", "~Raster", "~Database", "~Web", "~Mesh", "Pro~cessing", "~Help"].map((t) => <Mn key={t} t={t} />)}
    </div>
    <Toolbar1 />
    <Toolbar2 />
    <div className="flex h-[937px] shrink-0">
      <div className="flex w-[294px] shrink-0 flex-col pl-px"><Browser /><Layers /></div>
      <div className="flex w-[8px] shrink-0 items-center justify-center"><Dots v /></div>
      <div className="flex w-[763px] shrink-0 flex-col">
        <div className="flex h-[41px] shrink-0 items-center border border-[#8c9f86] bg-[#dff0d8] pr-[22px] pb-px pl-[9px] text-[#111]">
          <Svg c="h-[18px] w-[24px]" vb="0 0 24 18"><path d="M1 2l6 5L23 1 8 17z" fill="#2bd52b" stroke="#0f7a12" /></Svg>
          <span className="flex-1 pl-[9px]"><b>Layer Exported:</b> Successfully saved vector layer to <span className="text-[#2a8a0a] underline decoration-1 underline-offset-[2px] [text-decoration-skip-ink:none]">/home/student/Repositories/bristol_bay.gpkg</span></span>
          <Svg c="size-[18px]" vb="0 0 18 18"><circle cx="9" cy="9" r="8.500" fill="#2f332f" /><path d="M5.500 5.500l7 7M12.500 5.500l-7 7" stroke="#fff" strokeWidth="2.600" /></Svg>
        </div>
        <MapCanvas />
      </div>
    </div>
    <StatusBar />
  </div>
);

/* ---------- group stats window ---------- */

const Pie = () => <Svg c="size-[22px]" vb="0 0 22 22"><circle cx="11" cy="11" r="10.500" fill="#25a9d8" /><path d="M11 11L1.500 15A10.500 10.500 0 0 0 11 21.500z" fill="#5c8f1e" /><path d="M11 .5a10.500 10.500 0 0 1 0 21z" fill="url(#pieG)" /><defs><linearGradient id="pieG" x2="0" y2="1"><stop stopColor="#fccf4a" /><stop offset="1" stopColor="#f58a0c" /></linearGradient></defs></Svg>;
const Doc = () => <Svg c="size-[22px]" vb="0 0 22 22"><path d="M2 0h17l1 1v17l-4 4H2l-1-1V1z" fill="#e9e9e9" /><path d="M4 7h13M4 11h13M4 15h8" stroke="#8b8b8b" /><path d="M4 3.500h13" stroke="#bbb" strokeWidth="2" /><path d="M16 22v-4h4" stroke="#999" strokeWidth=".8" /></Svg>;
const Earth = () => <Svg c="size-[22px]" vb="0 0 22 22"><circle cx="11" cy="11" r="10.500" fill="#2286a8" /><path d="M3 4c3-4 10-4 13-2-1 2-4 1-4 4-3 0-2 4-5 3C5 8 4 7 3 4zM12 10c3-1 7 1 6 4-1 2-3 4-4 6-2-1-1-4-2-6s-2-3 0-4zM18 4c3 2 3 6 3 8-2-1-4-5-3-8z" fill="#7cb342" /></Svg>;
const Bars = () => <Svg c="size-[22px]" vb="0 0 22 22"><rect x="1.500" y="12" width="5.500" height="8" rx="1" fill="#e2571b" /><rect x="8" y="6" width="5.500" height="14" rx="1" fill="#1e93c4" /><rect x="14.500" y=".5" width="6" height="19.500" rx="1" fill="#6a9a32" /><path d="M0 21h22" stroke="#f5f5f5" strokeWidth="1.500" /></Svg>;

const Combo = ({ children, c, dim }) => (
  <div className={"flex h-[24px] items-center justify-between rounded-[2px] border border-[#858585] bg-[linear-gradient(#6e6e6e,#5b5b5b)] pr-[6px] pl-[4px] " + c}>
    <span className="flex items-center gap-[4px]">{children}</span><Caret c={dim ? "text-[#777]" : "text-[#c4c4c4]"} />
  </div>
);

const fields = [["areakm2", Pie], ["cat", Pie], ["f_code", Doc], ["f_codedesc", Doc], ["gid", Pie], ["Area", Earth], ["Perimeter", Earth], ["average", Bars], ["count", Bars], ["max", Bars]];

const GroupStats = () => (
  <div className="absolute top-[35px] left-[1086px] flex h-[560px] w-[824px] flex-col overflow-hidden rounded-[6px] bg-[#1a1a1a] shadow-[0_3px_12px_rgba(0,0,0,0.6)]">
    <TitleBar title="Group Stats" />
    <div className="flex h-[23px] shrink-0 items-center gap-[14.800px] border-b border-[#141414] pl-[12px]">
      {["~Data", "Feat~ures", "W~indow", "Hel~p"].map((t) => <Mn key={t} t={t} />)}
    </div>
    <div className="flex flex-1">
      <div className="mt-[9px] ml-[11px] flex w-[495px] shrink-0 flex-col border border-[#121212] bg-[#141414]">
        <div className="flex h-[22px] shrink-0 bg-[#1a1a1a] pb-px">
          <span className="flex w-[52px] items-center justify-end gap-[10px] border-t border-r border-[#777] bg-[#5e5e5e] pr-[4px] text-[#d0d0d0]">1 <Caret /></span>
          <span className="flex w-[56px] items-center justify-center border-t border-[#777] bg-[#5e5e5e] text-[#d0d0d0]">2</span>
        </div>
        <div className="grid h-[60px] w-[108px] grid-cols-[11px_40px_54px] grid-rows-[29px_29px] gap-x-px gap-y-px">
          <span className="flex flex-col items-center border-t border-[#777] bg-[#5e5e5e] pt-px leading-[18px]">1<span className="text-[6px] leading-[6px]">▴</span></span>
          <span className="bg-[#f5eceb]" /><span className="bg-[#f5eceb]" />
          <span className="flex items-center justify-center border-t border-[#777] bg-[#5e5e5e]">2</span>
          <span className="bg-[#f5eceb]" />
          <span className="flex items-center justify-center pb-px">24719.8</span>
        </div>
      </div>
      <div className="flex w-[23px] shrink-0 items-start justify-center pt-[307px] pl-[1px]"><Dots v /></div>
      <div className="flex w-[295px] flex-col">
        <div className="-ml-[5px] flex h-[20px] items-center justify-between pr-[4px] pb-px"><span>Control panel</span><DockButtons /></div>
        <div className="mt-[8px] flex h-[20px] items-center">Layers</div>
        <Combo c="mt-[6px] ml-px w-[282px]">swamp</Combo>
        <div className="mt-[6px] flex h-[20px] items-center">Fields</div>
        <div className="mt-[5px] flex h-[264px] w-[283px] bg-[#141414]">
          <div className="flex-1 pt-px pl-[5px]">
            {fields.map(([t, I]) => <div key={t} className="flex h-[26px] items-center gap-[7px]"><I />{t}</div>)}
          </div>
          <Scroll before="h-px" thumb="h-[146px]" />
        </div>
        <div className="mt-[8px] flex items-center">
          <span className="ml-px flex h-[24px] w-[44px] items-center justify-center rounded-[2px] border border-[#858585] bg-[linear-gradient(#6e6e6e,#5b5b5b)]">Filter</span>
          <span className="pl-[73px]">Columns</span>
        </div>
        <div className="mt-[6px] flex gap-[6px]"><span className="h-[60px] w-[112px] bg-[#141414]" /><span className="h-[60px] w-[166px] bg-[#141414]" /></div>
      </div>
    </div>
  </div>
);

/* ---------- field calculator ---------- */

const Box = ({ on }) => (
  <span className="flex size-[14px] shrink-0 items-center justify-center bg-[#141414]">{on && <Check size={12} strokeWidth={3.2} color="#d5d5d5" />}</span>
);
const Btn = ({ children, c }) => (
  <span className={"flex shrink-0 items-center justify-center rounded-[2px] border border-[#7e7e7e] bg-[linear-gradient(#6a6a6a,#595959)] " + c}>{children}</span>
);

const fnRows = [
  ["Aggregates", 1], ["aggregate"], ["count"], ["count_distinct"], ["count_missing"], ["max_length"], ["min_length"], ["Arrays", 1], ["array_count"], ["array_length"], ["Conversions", 1],
];

const Buoy = () => <Svg c="size-[14px]" vb="0 0 14 14"><circle cx="7" cy="7" r="4" stroke="#e0e0e0" strokeWidth="2" strokeDasharray="3.600 2.680" strokeDashoffset="-1.300" /><path d="M1 4V1h3M10 1h3v3M13 10v3h-3M4 13H1v-3M1.500 1.500l3 3M12.500 1.500l-3 3M12.500 12.500l-3-3M1.500 12.500l3-3" stroke="#e0e0e0" strokeWidth="1.200" /><circle cx="7" cy="7" r="5.500" stroke="#e0e0e0" strokeWidth=".8" /></Svg>;

const Calculator = () => (
  <div className="absolute top-[510px] left-[1087px] flex h-[628px] w-[822px] flex-col overflow-hidden rounded-[6px] border border-t-0 border-[#0a0a0a] border-l-[#4a4a4a] bg-[#1a1a1a] shadow-[0_4px_16px_rgba(0,0,0,0.75)]">
    <TitleBar title="Vertices swamp — Field Calculator" active />
    <div className="mt-[13px] ml-[12px] flex h-[20px] shrink-0 items-center gap-[5px] text-[#555]"><Box />Only update 0 selected features</div>

    <div className="mt-[9px] flex shrink-0 gap-[8px] pl-[13px]">
      <div className="w-[373px]">
        <div className="flex h-[21px] items-center gap-[5px] pb-px font-bold text-[#e2e2e2]"><Box on />Create a new field</div>
        <div className="flex h-[125px] flex-col rounded-[3px] border border-[#2c2c2c] px-[4px] pt-[12px]">
          <div className="flex h-[20px] items-center gap-[5px]"><Box />Create virtual field</div>
          <div className="mt-[4px] flex h-[27px] items-center"><span className="w-[124px]">Output field name</span><span className="h-[26px] w-[238px] rounded-[3px] bg-[#141414]" /></div>
          <div className="mt-[2px] flex h-[27px] items-center"><span className="w-[124px]">Output field type</span><Combo c="w-[237px]"><span className="text-[10px] font-bold text-[#505050]">123</span><span className="-ml-px">Whole Number (integer)</span></Combo></div>
          <div className="mt-[2px] flex h-[27px] items-center">
            <span className="w-[123px]">Output field length</span>
            <span className="flex h-[23px] w-[62px] items-center rounded-l-[3px] bg-[#141414] pl-[5px]">10</span><Spin h="h-[23px]" />
            <span className="w-[88px] pl-[7px]">Precision</span>
            <span className="flex h-[23px] w-[62px] items-center rounded-l-[3px] bg-[#141414] pl-[5px] text-[#555]">3</span><Spin dim h="h-[23px]" />
          </div>
        </div>
      </div>
      <div className="w-[413px]">
        <div className="flex h-[21px] items-center gap-[6px] pb-px font-bold text-[#e2e2e2]"><Box />Update existing field</div>
        <div className="flex h-[125px] rounded-[3px] border border-[#2c2c2c] px-[5px] pt-[53px]"><Combo dim c="w-[401px]" /></div>
      </div>
    </div>

    <div className="mt-[7px] ml-[13px] flex h-[29px] w-[794px] shrink-0 items-end border-b border-[#3c3c3c]">
      <span className="flex h-[28px] w-[90px] items-center justify-center rounded-t-[2px] border border-b-0 border-[#7a7a7a] bg-[#626262] pb-px">Expression</span>
      <span className="mb-px ml-px flex h-[26px] w-[116px] items-center justify-center rounded-t-[2px] border border-[#7a7a7a] bg-[#565656]">Function Editor</span>
    </div>

    <div className="flex h-[229px] shrink-0 pt-[10px] pl-[22px]">
      <div className="flex w-[274px] shrink-0 flex-col">
        <div className="flex gap-[4px]">
          <Btn c="h-[22px] w-[22px]"><NewDoc c="size-4" /></Btn>
          <Btn c="h-[22px] w-[22px]"><Save c="size-4" /></Btn>
          <Btn c="h-[22px] w-[22px]"><Svg c="size-4"><rect x="3" y="2" width="15" height="20" fill="#8c8c8c" /><path d="M8 20L20 3" stroke="#4c4c4c" strokeWidth="4" /></Svg></Btn>
          <Btn c="h-[22px] w-[22px]" />
          <Btn c="h-[22px] w-[22px]"><Svg c="size-4"><path d="M12 1v14M8 11l4 5 4-5M2 17v5h20v-5" stroke="#5b8fcb" strokeWidth="2.600" /></Svg></Btn>
          <Btn c="h-[22px] w-[22px]"><Svg c="size-4"><path d="M2 18v4h20v-4" stroke="#5b8fcb" strokeWidth="2.600" /><path d="M10 17V8H6l6-8 6 8h-4v9z" fill="#f4e32a" /></Svg></Btn>
        </div>
        <div className="mt-[7px] h-[98px] border border-white bg-white">
          <div className="flex h-[18px] items-center bg-[#efefef] pl-[8px] font-['DejaVu_Sans_Mono',monospace] text-[13px] leading-[18px]">
            <span className="text-[#4271ae]">count</span><span className="bg-[#b6f500] text-[#222]">(</span><span className="text-[#718c00]">"gid"</span><span className="-mr-px border-r border-black bg-[#b6f500] text-[#222]">)</span>
          </div>
        </div>
        <div className="mt-[8px] grid grid-cols-10 gap-[4px]">
          {["=", "+", "-", "/", "*", "^", "||", "(", ")", "'\\n'"].map((t) => <Btn key={t} c="h-[24px]">{t}</Btn>)}
        </div>
        <div className="mt-[10px] flex h-[25px] items-center">
          <span className="w-[52px]">Feature</span>
          <span className="flex h-[25px] w-[143px] items-center rounded-l-[3px] bg-[#141414] pl-[4px] text-[#020202]">Marsh/Swamp</span>
          <Btn c="h-[25px] w-[19px]"><Caret c="text-[#c0c0c0]" /></Btn>
          <Btn c="ml-[8px] h-[22px] w-[22px]"><Svg c="size-[14px]" vb="0 0 14 14"><path d="M12 0v13L2 6.500z" fill="#6fa3df" stroke="#3b6ea8" /></Svg></Btn>
          <Btn c="ml-[8px] h-[22px] w-[22px]"><Svg c="size-[14px]" vb="0 0 14 14"><path d="M2 0v13l10-6.500z" fill="#6fa3df" stroke="#3b6ea8" /></Svg></Btn>
        </div>
        <div className="mt-[7px] flex h-[20px] items-center"><span className="w-[57px]">Preview:</span>7469</div>
      </div>

      <div className="flex w-[23px] shrink-0 items-center justify-center pl-px"><Dots v /></div>

      <div className="flex w-[224px] shrink-0 flex-col">
        <div className="flex h-[26px] items-center justify-between">
          <span className="flex h-[26px] w-[139px] items-center rounded-[3px] bg-[#141414] pr-[9px] pl-[8px]">
            <Search size={14} strokeWidth={1.8} color="#aaa" /><span className="flex-1 pl-[7px]">count</span>
            <Svg c="h-[10px] w-[13px]" vb="0 0 13 10"><path d="M0 5l4-5h9v10H4z" fill="#d2d2d2" /><path d="M6 2.500l5 5M11 2.500l-5 5" stroke="#222" strokeWidth="1.200" /></Svg>
          </span>
          <Btn c="h-[24px] w-[78px] text-[#828282]">Show Help</Btn>
        </div>
        <div className="mt-[6px] flex h-[186px] overflow-hidden bg-[#141414]">
          <div className="flex-1">
            {fnRows.map(([t, head]) => head ? (
              <div key={t} className="flex h-[18px] items-center"><span className="flex w-[21px] justify-end pr-[6px]">{t !== "Conversions" && <Caret c="text-[#bbb]" />}</span><span className="flex h-[18px] flex-1 items-center bg-[#5f5f5f] pl-[3px]">{t}</span></div>
            ) : (
              <div key={t} className={"flex h-[18px] items-center pl-[44px] " + (t === "count" ? "bg-[#2f2440]" : "")}>{t}</div>
            ))}
          </div>
          <Scroll before="h-px" thumb="h-[84px]" />
        </div>
      </div>

      <div className="flex w-[15px] shrink-0 items-center pl-[3px]"><Dots v /></div>

      <div className="flex h-[218px] w-[239px] shrink-0">
        <div className="flex-1 overflow-hidden bg-white pt-[4px] pr-[4px] pl-[4px] leading-[18px] text-[#1a1a1a]">
          <div className="h-[23px] bg-[#f6f6f6] text-[15.600px] leading-[24px] font-bold text-[#93b023]">function count</div>
          <div className="mt-[12px]">Returns the count of matching features.</div>
          <div className="mt-[12px] h-[18px] bg-[#f6f6f6] font-bold text-[#93b023]">Syntax</div>
          <div className="mt-[12px] font-['DejaVu_Sans_Mono',monospace] text-[13px]">
            <div className="whitespace-nowrap"><span className="font-['Noto_Sans',sans-serif] font-bold text-[#0a6099]">count</span>(<i className="text-[#bf0c0c]">expression</i>[,<i className="text-[#bf0c0c]">group_by</i>]</div>
            <div>[,<i className="text-[#bf0c0c]">filter</i>])</div>
          </div>
          <div className="mt-[18px]">[ ] marks optional components</div>
          <div className="mt-[12px] h-[18px] bg-[#f6f6f6] font-bold text-[#93b023]">Arguments</div>
        </div>
        <Scroll before="h-px" thumb="h-[79px]" />
      </div>
    </div>

    <div className="mt-[38px] flex shrink-0 items-center pl-[23px]">
      <FileIcon size={13} strokeWidth={1.8} color="#a0a0a0" />
      <p className="w-[765px] pl-[55px] leading-[18px]">You are editing information on this layer but the layer is currently not in edit mode. If you click OK, edit mode will<br />automatically be turned on.</p>
    </div>

    <div className="mt-[29px] flex shrink-0 items-center gap-[8px] pr-[14px] pl-[13px]">
      <Btn c="h-[25px] w-[78px] gap-[4px]"><Buoy /><Mn t="~Help" /></Btn>
      <span className="flex-1" />
      <Btn c="h-[25px] w-[78px] gap-[4px] text-[#7e7e7e]"><Check size={14} strokeWidth={2} color="#999" /><Mn t="~OK" /></Btn>
      <Btn c="h-[25px] w-[78px] gap-[4px] text-[#e0e0e0]"><Ban size={13} strokeWidth={1.800} /><Mn t="~Cancel" /></Btn>
    </div>
  </div>
);

/* ---------- desktop ---------- */

const Wallpaper = () => (
  <svg className="absolute inset-0 size-full" viewBox="0 0 1920 1200" preserveAspectRatio="none">
    <defs>
      <linearGradient id="wNavy"><stop stopColor="#1f2456" /><stop offset="1" stopColor="#3a3c80" /></linearGradient>
      <linearGradient id="wRed"><stop stopColor="#be3f38" /><stop offset=".4" stopColor="#a83136" /><stop offset=".65" stopColor="#8a2f52" /><stop offset="1" stopColor="#6c3468" /></linearGradient>
      <linearGradient id="wBlue"><stop stopColor="#443a80" /><stop offset=".5" stopColor="#4a68a4" /><stop offset="1" stopColor="#5089b6" /></linearGradient>
      <linearGradient id="wEdge" x2="0" y2="1"><stop stopColor="#62457a" /><stop offset="1" stopColor="#55508c" /></linearGradient>
    </defs>
    <path d="M0 0h1920v1200H0z" fill="url(#wNavy)" />
    <path d="M0 845l200 20v200H0z" fill="url(#wEdge)" />
    <path d="M800 740l300 60 220 320 30 80H800z" fill="#6c3468" />
    <path d="M1850 848h70v80h-70z" fill="#9654ba" />
    <path d="M0 955l100-60 980-10 270 255 310 60H0z" fill="url(#wRed)" />
    <path d="M1330 1134l400-200 190-12v278h-260z" fill="url(#wBlue)" />
  </svg>
);

const Meter = ({ t, w, fill }) => (
  <span className={"flex flex-col gap-[1px] text-[11px] leading-[20px] " + w}>
    <span className="whitespace-nowrap">{t}</span>
    <span className="-mt-[1px] flex h-[3px] bg-white/30"><span className={"bg-white/90 " + fill} /></span>
  </span>
);

const TopBar = () => (
  <div className="absolute inset-x-0 top-0 flex h-[27px] items-center text-[#dfe0ea]">
    <div className="flex w-[707px] items-center pl-[6px]">
      <Svg c="size-[17px]" vb="0 0 17 17"><path d="M6 1.200a7.800 7.800 0 1 0 5 0M8.500 0v7.500" stroke="#e6e6ee" strokeWidth="1.200" /></Svg>
      <b className="pl-[11px]">QGIS Desktop</b><span className="pl-[10px]">Vertices Swamp</span>
    </div>
    <div className="w-[506px] text-center text-[15px]">Sunday 5 November, 21:22</div>
    <div className="flex flex-1 items-center">
      <div className="flex w-[319px] shrink-0 gap-[13px] pl-[176px]">
        <Meter t="RAM 77.3%" w="w-[60px]" fill="w-[46px]" /><Meter t="CPU 48.2%" w="w-[58px]" fill="w-[28px]" />
      </div>
      <div className="flex">
        <Cell c="w-[30px]"><CirclePause size={18} strokeWidth={1.400} /></Cell>
        <Cell c="w-[30px]"><Svg c="size-5"><path d="M5 5h14v14H5zM8 2.500L12 0l4 2.500M8 21.500l4 2.500 4-2.500M2.500 8L0 12l2.500 4M21.500 8l2.500 4-2.500 4" stroke="#dfe0ea" strokeWidth="1.400" /><path d="M12 16V8M9 11l3-3 3 3" stroke="#dfe0ea" strokeWidth="1.400" /></Svg></Cell>
        <Cell c="w-[30px]"><Svg c="size-[18px]"><path d="M10 2h4l1 4H9zM8 9h8l1 4H7zM6 16h12l1 3h3v3H2v-3h3z" fill="#dfe0ea" /></Svg></Cell>
        <Cell c="w-[30px]"><Svg c="size-5"><rect x="1" y="3" width="22" height="18" stroke="#8d8fb5" strokeWidth="1.200" /><path d="M1 3h22" stroke="#dfe0ea" strokeWidth="2" /><path d="M6 9l4 3-4 3M12 17h5" stroke="#dfe0ea" strokeWidth="1.600" /></Svg></Cell>
        <Cell c="w-[30px]"><Svg c="size-[18px]"><path d="M10 22H4V4h4M15 4h4v3M8 2h7v4H8z" stroke="#dfe0ea" strokeWidth="1.400" /><rect x="11" y="9" width="9" height="14" stroke="#dfe0ea" strokeWidth="1.400" /></Svg></Cell>
        <Cell c="w-[30px]"><CirclePause size={18} strokeWidth={1.400} /></Cell>
        <Cell c="w-[30px]"><Svg c="h-5 w-[14px]" vb="0 0 14 20"><path d="M7 0a6 6 0 0 1 6 6c0 4-3 5-3 10H4C4 11 1 10 1 6a6 6 0 0 1 6-6zM4.500 17h5v2.500h-5z" fill="#e6e6ee" /></Svg></Cell>
        <Cell c="w-[30px]"><Volume1 size={19} strokeWidth={1.400} /></Cell>
        <Cell c="w-[30px]"><Bluetooth size={18} strokeWidth={1.500} /></Cell>
        <Cell c="w-[30px]"><Monitor size={22} strokeWidth={1.200} /></Cell>
        <Cell c="w-[30px]"><span className="text-[16px]">us</span></Cell>
        <Cell c="w-[30px]"><Svg c="size-[18px]" vb="0 0 18 18"><path d="M10 3H1v10h11V9M7 13v3M4 16.500h7M14 8v9" stroke="#dfe0ea" strokeWidth="1.300" /><path d="M12 3h5v5h-5zM13 3V.500h3V3" stroke="#dfe0ea" strokeWidth="1.200" /></Svg></Cell>
        <Cell c="w-[26px]"><ChevronDown size={17} strokeWidth={1.500} /></Cell>
      </div>
    </div>
  </div>
);

const Edge = ({ c }) => (
  <Svg c={c} vb="0 0 28 28">
    <defs><linearGradient id="edA" x2="1" y2=".4"><stop stopColor="#1b8ede" /><stop offset="1" stopColor="#4fd08a" /></linearGradient><linearGradient id="edB" x2="1" y2="1"><stop stopColor="#1c86d8" /><stop offset="1" stopColor="#0c4f9a" /></linearGradient></defs>
    <path d="M1 13C2 5 8 0 15 0c8 0 13 5 13 11 0 5-4 7-8 7-3 0-4-1-3-3 2-5-2-8-7-7-4 0-7 2-9 5z" fill="url(#edA)" />
    <path d="M1 13c2-3 5-5 9-5-3 3-3 7-1 10 3 5 9 6 16 3-3 5-7 7-11 7C6 28 0 21 1 13z" fill="url(#edB)" />
    <path d="M9 18c-1-3 0-7 3-8-2 3-1 7 2 9 3 2 8 2 11 2-7 3-13 2-16-3z" fill="#0a3f80" />
  </Svg>
);
const Vlc = ({ c }) => <Svg c={c} vb="0 0 28 28"><path d="M3 21h22l2 6H1z" fill="#e8821a" /><path d="M12 1h4l5 22c-3 2-11 2-14 0z" fill="#f2902a" /><path d="M11 6h6l1.300 5h-8.600zM8.600 15h10.800l1 4.500H7.600z" fill="#f7f7f7" /></Svg>;
const Acrobat = ({ c }) => <Svg c={c} vb="0 0 28 28"><path d="M20 2h5v23h-5z" fill="#e8e8e8" /><path d="M22 2v23" stroke="#999" /><path d="M3 1h17v26H3z" fill="#e2231f" /><path d="M7 20c3-2 6-9 5-12s-3 0 0 5 6 4 6 3-8-1-11 4z" stroke="#fff" strokeWidth="1.400" /></Svg>;
const Qgis = ({ c }) => <Svg c={c} vb="0 0 32 32"><circle cx="15" cy="14" r="10.500" stroke="#76a82b" strokeWidth="6" /><path d="M17 14l4 1 10 11-2 4h-5L15 19z" fill="#5a9a2a" /><path d="M13 11l7 2-5 5z" fill="#f08a24" /><path d="M16 15l10 11" stroke="#c8d850" strokeWidth="2" /></Svg>;

const dockApps = [
  ["gear", 0, <Svg c="size-[30px]" vb="0 0 30 30"><circle cx="15" cy="15" r="10" fill="#f3f3f3" /><circle cx="15" cy="15" r="12" stroke="#f3f3f3" strokeWidth="4" strokeDasharray="4.700 4.720" /><circle cx="15" cy="15" r="5.500" fill="#2f8fe8" stroke="#333" strokeWidth="1.500" /></Svg>],
  ["term", 0, <Svg c="size-[28px]" vb="0 0 28 28"><rect x="1" y="2" width="26" height="24" rx="2" fill="#454548" /><path d="M1 4a2 2 0 0 1 2-2h6v5H1z" fill="#bdbdbd" /><path d="M9 2h9v5H9z" fill="#8f8f8f" /><path d="M18 2h7a2 2 0 0 1 2 2v3h-9z" fill="#6d6d6d" /><path d="M12 12l4 4.500-4 4.500" stroke="#eee" strokeWidth="1.400" /></Svg>],
  ["files", 0, <Svg c="size-[28px]" vb="0 0 28 28"><path d="M1 2h11l3 4v5H1z" fill="#dca30e" /><path d="M0 6h28v20H0z" fill="#fcd049" /><path d="M7 26V15h15v11h-4v-6h-7v6z" fill="#1f7fe0" /></Svg>],
  ["edge", 1, <Edge c="size-[28px]" />],
  ["todo", 0, <Svg c="size-[26px]" vb="0 0 26 26"><rect x="1" y="1" width="24" height="24" rx="3" fill="#e44332" /><path d="M1 8l5 2.500L15 5M1 13.500L6 16l9-5.500M1 19l5 2.500 9-5.500" stroke="#fff" strokeWidth="1.800" /></Svg>],
  ["obs", 0, <Svg c="size-[32px]" vb="0 0 32 32"><path d="M16 1l6 5 1 8 5 7-5 7-6 3-10-6 1-8 3-4 1-7z" fill="#6c47c4" /><path d="M16 1l-5 12 5 5 6-4-1-8z" fill="#a78bef" /><path d="M11 13l-3 4-1 8 9 6 1-13z" fill="#5128b0" /><path d="M17 18l6-4 5 7-5 7-6 3z" fill="#8562e0" /></Svg>],
  ["spot", 0, <span className="flex size-[26px] items-center justify-center rounded-full bg-white"><FaSpotify className="size-[28px] shrink-0" color="#1fb262" /></span>],
  ["teams", 0, <Svg c="size-[32px]" vb="0 0 32 32"><circle cx="19" cy="6" r="4" fill="#7b83eb" /><circle cx="27" cy="8" r="3" fill="#5059c9" /><path d="M13 11h13v10a7 7 0 0 1-13 2z" fill="#7b83eb" /><path d="M25 12h6v9c-1 3-4 4-6 2z" fill="#5059c9" /><rect x="1" y="9" width="15" height="15" rx="1.500" fill="#4350b8" /><text x="4.500" y="21" fontSize="12" fontWeight="700" fontFamily="Noto Sans" fill="#fff">T</text><path d="M10 30L30 17v8l-8 6H10z" fill="#b9a0ee" /></Svg>],
  ["vlc", 1, <Vlc c="size-[28px]" />],
  ["qgis", 2, <Qgis c="size-[32px]" />],
  ["acro", 1, <Acrobat c="size-[28px]" />],
];

const Pager = ({ children }) => (
  <span className="flex h-[34px] w-[57px] items-center justify-center border border-[#9a8488] bg-[#6b5054]">{children}</span>
);

const Dock = () => (
  <div className="absolute top-[1148px] left-[8px] flex h-[44px] w-[1904px] items-center rounded-[6px] bg-[linear-gradient(90deg,#552726_0%,#45201f_35%,#3c2030_55%,#372632_66%,#2d3948_80%,#2e4050_100%)]">
    <Svg c="ml-[12px] size-[28px]" vb="0 0 28 28"><circle cx="14" cy="14" r="13.500" fill="#7e8a8a" /><path d="M4 7c3-5 8-6 10-5 1 4-2 5-1 8 2 3-1 5-3 8-3-1-6-6-6-11zM18 4c5 2 8 6 8 11-1 5-4 8-5 8-2-3 0-6-2-9s-3-6-1-10z" fill="#b9c0bd" /></Svg>
    <SiArchlinux className="ml-[491px] size-[34px]" color="#1793d1" />
    <div className="ml-[10px] flex gap-px">
      <Pager><Edge c="size-[15px]" /></Pager>
      <Pager><Vlc c="size-[17px]" /></Pager>
      <span className="flex h-[34px] w-[57px] items-center border border-[#7a62ac] bg-[#6a5090]">
        <span className="flex w-[31px] justify-center opacity-40"><Qgis c="size-[16px]" /></span>
        <span className="flex h-full flex-1 flex-col border-l border-[#8f7abf]"><span className="flex h-[17px] items-center justify-center opacity-40"><Qgis c="size-[12px]" /></span><span className="flex h-[15px] items-center justify-center border border-[#8f7abf] bg-[#7c66ab] opacity-70"><Qgis c="size-[9px]" /></span></span>
      </span>
      <Pager><Acrobat c="size-[16px]" /></Pager>
    </div>
    <div className="ml-[4px] flex h-[44px]">
      {dockApps.map(([k, s, icon]) => (
        <span key={k} className="relative flex w-[47px] items-center justify-center">
          <span className={"flex h-[40px] w-[42px] items-center justify-center rounded-[4px] " + (s === 2 ? "border border-white/10 bg-white/10" : "")}>{icon}</span>
          {s === 1 && <span className="absolute bottom-[1px] h-[3px] w-[13px] rounded-full bg-[#9a8b94]" />}
          {s === 2 && <span className="absolute bottom-0 flex size-[11px] items-center justify-center rounded-full bg-white"><Svg c="size-[9px]" vb="0 0 9 9"><path d="M4.500 1v7M1 4.500h7" stroke="#333" /></Svg></span>}
        </span>
      ))}
    </div>
    <div className="ml-[22px] flex size-[28px] flex-col items-center">
      <Svg c="size-[28px]" vb="0 0 28 28"><path d="M2 4h24l-3 23H5z" fill="#8f8f96" /><ellipse cx="14" cy="4" rx="12" ry="3.500" fill="#b9b9bd" /><g transform="translate(8 12)"><Recycle size={12} color="#2f8fd0" strokeWidth={3} /></g></Svg>
    </div>
    <span className="flex-1" />
    <Svg c="mr-[4px] size-[34px]" vb="0 0 34 34"><circle cx="17" cy="17" r="16.500" fill="#f0405a" /><circle cx="17" cy="12.500" r="4.500" stroke="#fff" strokeWidth="1.400" /><path d="M9 26c0-9 16-9 16 0z" stroke="#fff" strokeWidth="1.400" /></Svg>
  </div>
);

export default function App() {
  return (
    <div className="relative h-[1200px] w-[1920px] overflow-hidden bg-[#262b60] font-['Noto_Sans',sans-serif] text-[13.050px] leading-[18px] text-[#d4d4d4]">
      <Wallpaper />
      <TopBar />
      <MainWindow />
      <GroupStats />
      <Calculator />
      <Dock />
    </div>
  );
}
